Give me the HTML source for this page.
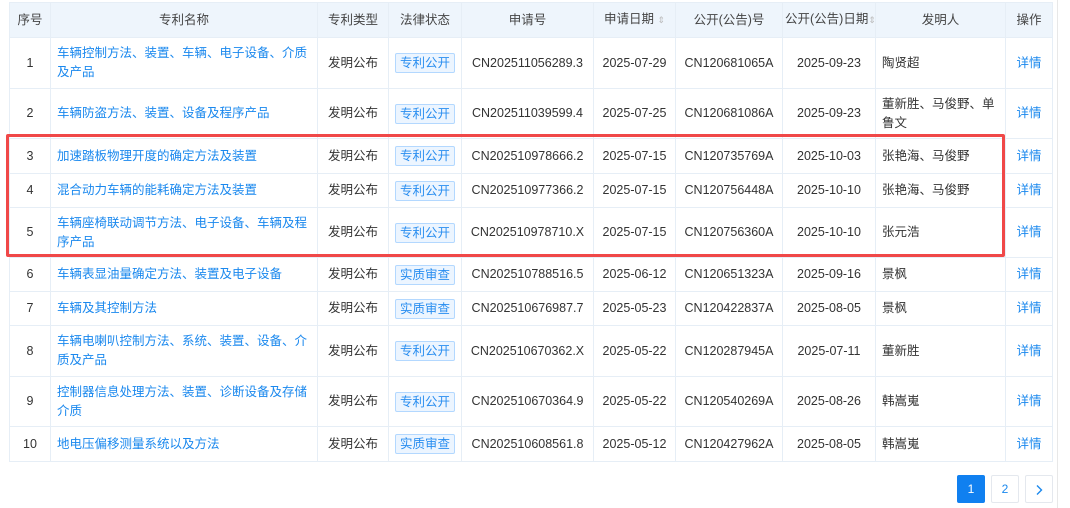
<!DOCTYPE html>
<html><head><meta charset="utf-8"><style>
body{margin:0;width:1070px;height:508px;background:#fff;font-family:"Liberation Sans","Noto Sans CJK SC",sans-serif;font-size:12.5px;color:#333;position:relative;overflow:hidden}
table{position:absolute;left:9px;top:2px;border-collapse:collapse;table-layout:fixed;width:1043px}
td,th{border:1px solid #e6eef6;padding:0 6px;text-align:center;font-weight:normal;line-height:19px;overflow:hidden}
th{background:#eef5fc;height:34px;color:#444;white-space:nowrap;padding:0 2px}
td.n{white-space:nowrap;padding:0 2px}
td.l{text-align:left}
a{color:#1a88ee;text-decoration:none}
.tag{display:inline-block;background:#ecf5ff;border:1px solid #b3d8ff;color:#2a8ef0;padding:0 4px;line-height:18px;border-radius:2px;white-space:nowrap}
.s{color:#bbb;font-size:9px}
.red{position:absolute;left:6px;top:134px;width:993px;height:117px;border:3px solid #f04848;border-radius:2px}
.pg{position:absolute;top:475px;width:26px;height:26px;border:1px solid #e4e8ee;border-radius:2px;text-align:center;line-height:26px;color:#1a88ee;font-size:12px}
.sb{position:absolute;left:1057px;top:0;width:1px;height:508px;background:#e8e8e8}
</style></head><body>
<table>
<colgroup><col style="width:41px"><col style="width:267px"><col style="width:71px"><col style="width:73px"><col style="width:132px"><col style="width:82px"><col style="width:107px"><col style="width:93px"><col style="width:130px"><col style="width:47px"></colgroup>
<tr><th>序号</th><th>专利名称</th><th>专利类型</th><th>法律状态</th><th>申请号</th><th>申请日期 <span class="s">⇕</span></th><th>公开(公告)号</th><th>公开(公告)日期<span class="s">⇕</span></th><th>发明人</th><th>操作</th></tr>
<tr style="height:51px"><td>1</td><td class="l"><a>车辆控制方法、装置、车辆、电子设备、介质及产品</a></td><td class="n">发明公布</td><td class="n"><span class="tag">专利公开</span></td><td class="n">CN202511056289.3</td><td class="n">2025-07-29</td><td class="n">CN120681065A</td><td class="n">2025-09-23</td><td class="l">陶贤超</td><td class="n"><a>详情</a></td></tr>
<tr style="height:50px"><td>2</td><td class="l"><a>车辆防盗方法、装置、设备及程序产品</a></td><td class="n">发明公布</td><td class="n"><span class="tag">专利公开</span></td><td class="n">CN202511039599.4</td><td class="n">2025-07-25</td><td class="n">CN120681086A</td><td class="n">2025-09-23</td><td class="l">董新胜、马俊野、单鲁文</td><td class="n"><a>详情</a></td></tr>
<tr style="height:35px"><td>3</td><td class="l"><a>加速踏板物理开度的确定方法及装置</a></td><td class="n">发明公布</td><td class="n"><span class="tag">专利公开</span></td><td class="n">CN202510978666.2</td><td class="n">2025-07-15</td><td class="n">CN120735769A</td><td class="n">2025-10-03</td><td class="l">张艳海、马俊野</td><td class="n"><a>详情</a></td></tr>
<tr style="height:34px"><td>4</td><td class="l"><a>混合动力车辆的能耗确定方法及装置</a></td><td class="n">发明公布</td><td class="n"><span class="tag">专利公开</span></td><td class="n">CN202510977366.2</td><td class="n">2025-07-15</td><td class="n">CN120756448A</td><td class="n">2025-10-10</td><td class="l">张艳海、马俊野</td><td class="n"><a>详情</a></td></tr>
<tr style="height:50px"><td>5</td><td class="l"><a>车辆座椅联动调节方法、电子设备、车辆及程序产品</a></td><td class="n">发明公布</td><td class="n"><span class="tag">专利公开</span></td><td class="n">CN202510978710.X</td><td class="n">2025-07-15</td><td class="n">CN120756360A</td><td class="n">2025-10-10</td><td class="l">张元浩</td><td class="n"><a>详情</a></td></tr>
<tr style="height:34px"><td>6</td><td class="l"><a>车辆表显油量确定方法、装置及电子设备</a></td><td class="n">发明公布</td><td class="n"><span class="tag">实质审查</span></td><td class="n">CN202510788516.5</td><td class="n">2025-06-12</td><td class="n">CN120651323A</td><td class="n">2025-09-16</td><td class="l">景枫</td><td class="n"><a>详情</a></td></tr>
<tr style="height:34px"><td>7</td><td class="l"><a>车辆及其控制方法</a></td><td class="n">发明公布</td><td class="n"><span class="tag">实质审查</span></td><td class="n">CN202510676987.7</td><td class="n">2025-05-23</td><td class="n">CN120422837A</td><td class="n">2025-08-05</td><td class="l">景枫</td><td class="n"><a>详情</a></td></tr>
<tr style="height:51px"><td>8</td><td class="l"><a>车辆电喇叭控制方法、系统、装置、设备、介质及产品</a></td><td class="n">发明公布</td><td class="n"><span class="tag">专利公开</span></td><td class="n">CN202510670362.X</td><td class="n">2025-05-22</td><td class="n">CN120287945A</td><td class="n">2025-07-11</td><td class="l">董新胜</td><td class="n"><a>详情</a></td></tr>
<tr style="height:50px"><td>9</td><td class="l"><a>控制器信息处理方法、装置、诊断设备及存储介质</a></td><td class="n">发明公布</td><td class="n"><span class="tag">专利公开</span></td><td class="n">CN202510670364.9</td><td class="n">2025-05-22</td><td class="n">CN120540269A</td><td class="n">2025-08-26</td><td class="l">韩嵩嵬</td><td class="n"><a>详情</a></td></tr>
<tr style="height:35px"><td>10</td><td class="l"><a>地电压偏移测量系统以及方法</a></td><td class="n">发明公布</td><td class="n"><span class="tag">实质审查</span></td><td class="n">CN202510608561.8</td><td class="n">2025-05-12</td><td class="n">CN120427962A</td><td class="n">2025-08-05</td><td class="l">韩嵩嵬</td><td class="n"><a>详情</a></td></tr>
</table>
<div class="red"></div>
<div class="sb"></div>
<div class="pg" style="left:957px;background:#1080f0;border-color:#1080f0;color:#fff">1</div>
<div class="pg" style="left:991px">2</div>
<div class="pg" style="left:1025px"><svg width="10" height="12" viewBox="0 0 10 12" style="vertical-align:middle"><path d="M3 1.5L7.5 6L3 10.5" fill="none" stroke="#1a88ee" stroke-width="1.4"/></svg></div>
</body></html>
